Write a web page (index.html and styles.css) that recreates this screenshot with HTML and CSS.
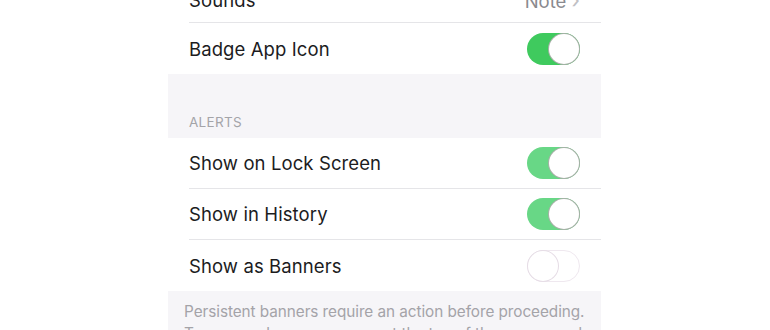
FILE: index.html
```html
<!DOCTYPE html>
<html>
<head>
<meta charset="utf-8">
<link rel="stylesheet" href="styles.css">
</head>
<body>
<div class="panel">
  <div class="group top">
    <div class="row first">
      <span class="label">Sounds</span>
      <span class="value">Note <span class="chev">&#x203A;</span></span>
    </div>
    <div class="row">
      <span class="label">Badge App Icon</span>
      <span class="toggle on dark"><span class="knob"></span></span>
    </div>
  </div>
  <div class="header">ALERTS</div>
  <div class="group">
    <div class="row">
      <span class="label">Show on Lock Screen</span>
      <span class="toggle on"><span class="knob"></span></span>
    </div>
    <div class="row">
      <span class="label">Show in History</span>
      <span class="toggle on"><span class="knob"></span></span>
    </div>
    <div class="row">
      <span class="label">Show as Banners</span>
      <span class="toggle off"><span class="knob"></span></span>
    </div>
  </div>
  <div class="footer">Persistent banners require an action before proceeding. Temporary banners appear at the top of the screen and go away automatically.</div>
</div>
</body>
</html>
```
FILE: styles.css
```css
html, body {
  margin: 0;
  padding: 0;
  background: #ffffff;
  overflow: hidden;
}
body {
  width: 770px;
  height: 330px;
  font-family: "Inter", "Roboto", sans-serif;
}
.panel {
  width: 433px;
  margin-left: 168px;
  margin-top: -28px;
  background: #f6f5f8;
  height: 400px;
}
.group {
  background: #ffffff;
}
.row {
  height: 51px;
  margin-left: 21px;
  padding-right: 21px;
  display: flex;
  align-items: center;
  justify-content: space-between;
  border-bottom: 1px solid #e5e5e8;
  box-sizing: border-box;
}
.row.first {
  padding-top: 5px;
}
.row:last-child {
  border-bottom: none;
}
.label {
  font-size: 18.5px;
  color: #1c1c1e;
  letter-spacing: 0.1px;
}
.value {
  font-size: 18.5px;
  color: #8a8a8f;
}
.chev {
  font-size: 22px;
  color: #c0c0c4;
}
.header {
  height: 64px;
  box-sizing: border-box;
  padding-left: 21px;
  padding-bottom: 8px;
  display: flex;
  align-items: flex-end;
  font-size: 13.5px;
  color: #a4a4a8;
  letter-spacing: 0.3px;
}
.toggle {
  width: 53px;
  height: 32px;
  border-radius: 16px;
  box-sizing: border-box;
  position: relative;
  display: block;
  flex: none;
}
.toggle.on {
  background: #68d786;
}
.toggle.on.dark {
  background: #3fca5e;
}
.toggle.off {
  background: #ffffff;
  border: 1px solid #efe8ef;
}
.knob {
  position: absolute;
  top: 1px;
  right: 1px;
  width: 30px;
  height: 30px;
  border-radius: 50%;
  background: #ffffff;
  box-shadow: 0 0 0 1px #a8b0a8;
}
.toggle.off .knob {
  top: 0;
  left: 0;
  right: auto;
  box-shadow: 0 0 0 1px #e6dde6;
}
.footer {
  padding: 10px 8px 0 16px;
  font-size: 15.3px;
  letter-spacing: -0.05px;
  line-height: 22px;
  color: #a4a3a8;
}
```
